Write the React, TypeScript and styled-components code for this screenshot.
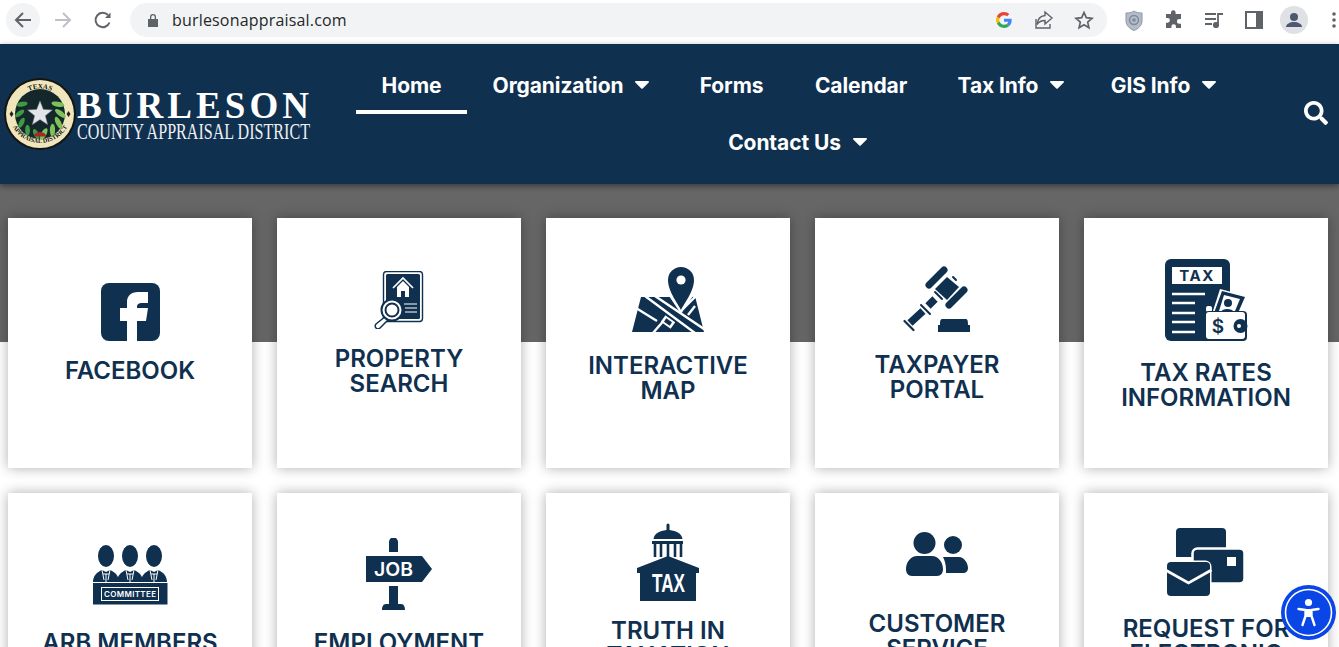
import React from "react";
import styled, { createGlobalStyle } from "styled-components";
import { FaSearch } from "react-icons/fa";

const NAVY = "#10304f";

const Global = createGlobalStyle`
  html, body { margin: 0; padding: 0; background: #fff; height: 647px; overflow: hidden; }
  * { box-sizing: border-box; }
`;

const Page = styled.div`
  width: 1339px;
  height: 647px;
  overflow: hidden;
  font-family: Inter, "Noto Sans", sans-serif;
`;

const Toolbar = styled.div`
  height: 44px;
  display: flex;
  align-items: flex-start;
  padding: 0 0 0 3px;
  background: #fff;
`;

const ToolButton = styled.div<{ $round?: boolean }>`
  flex: 0 0 40px;
  height: 40px;
  display: flex;
  align-items: center;
  justify-content: center;
  position: relative;
  &::before {
    content: "";
    display: ${(p) => (p.$round ? "block" : "none")};
    position: absolute;
    width: 34px;
    height: 34px;
    border-radius: 50%;
    background: #f1f3f4;
    left: 3px;
    top: 3px;
  }
  svg { position: relative; }
`;

const Omnibox = styled.div`
  flex: 0 0 977px;
  height: 34px;
  margin: 3px 7px 0 7px;
  border-radius: 17px;
  background: #f1f3f4;
  display: flex;
  align-items: center;
  padding: 0 3px 0 16px;
  color: #25272a;
`;

const Url = styled.span`
  font-family: "Open Sans", sans-serif;
  font-size: 16px;
  letter-spacing: 0.18px;
  margin-left: 12px;
  flex: 1;
`;

const OmniIcon = styled.div`
  flex: 0 0 40px;
  height: 34px;
  display: flex;
  align-items: center;
  justify-content: center;
`;

const Header = styled.header`
  height: 140px;
  background: ${NAVY};
  display: flex;
  position: relative;
  box-shadow: 0 2px 6px rgba(0, 0, 0, 0.45);
  z-index: 2;
`;

const LogoArea = styled.div`
  flex: 0 0 356px;
  padding: 34px 0 0 3px;
`;

const Nav = styled.nav`
  flex: 0 0 883px;
  display: flex;
  flex-wrap: wrap;
  justify-content: center;
  align-content: flex-start;
  padding-top: 13px;
`;

const NavItem = styled.a<{ $w: number; $active?: boolean }>`
  flex: 0 0 ${(p) => p.$w}px;
  height: 57px;
  display: flex;
  align-items: center;
  justify-content: center;
  gap: 12px;
  color: #fff;
  font-size: 21px;
  font-weight: 700;
  letter-spacing: -0.1px;
  position: relative;
  padding-bottom: 1px;
  &::after {
    content: "";
    display: ${(p) => (p.$active ? "block" : "none")};
    position: absolute;
    left: 0;
    right: 0;
    bottom: 0;
    height: 4px;
    background: #fff;
  }
`;

const SearchBox = styled.div`
  flex: 1;
  display: flex;
  justify-content: flex-end;
  padding: 57px 11px 0 0;
  color: #fff;
`;

const Main = styled.main`
  height: 463px;
  background: linear-gradient(#666 0, #666 158px, #fff 158px);
  padding: 34px 11px 0 8px;
  display: grid;
  grid-template-columns: repeat(5, 244px);
  grid-auto-rows: 250px;
  gap: 25px;
`;

const Card = styled.a<{ $top: number }>`
  background: #fff;
  box-shadow: 0 0 12px rgba(0, 0, 0, 0.32);
  padding-top: ${(p) => p.$top}px;
  display: flex;
  flex-direction: column;
  align-items: center;
  color: ${NAVY};
  svg { display: block; flex: none; }
`;

const Title = styled.h3<{ $gap: number }>`
  margin: ${(p) => p.$gap}px 0 0;
  font-size: 24px;
  line-height: 25px;
  font-weight: 600;
  text-align: center;
  white-space: pre-line;
`;

const A11y = styled.div`
  position: fixed;
  left: 1281px;
  top: 585px;
  width: 55px;
  height: 55px;
  svg { display: block; }
`;

const Caret = () => (
  <svg width="14" height="8" viewBox="0 0 14 8">
    <path fill="#fff" d="M1 0h12c1 0 1.300 1 .7 1.600L7.700 7.400c-.4.400-1 .400-1.400 0L.3 1.600C-.3 1 0 0 1 0z" />
  </svg>
);

const G = () => (
  <svg width="16" height="16" viewBox="0 0 48 48">
    <path fill="#EA4335" d="M24 9.500c3.500 0 6.700 1.200 9.200 3.600l6.900-6.900C35.900 2.400 30.500 0 24 0 14.600 0 6.500 5.400 2.600 13.200l8 6.200C12.500 13.700 17.800 9.500 24 9.500z" />
    <path fill="#4285F4" d="M47 24.500c0-1.600-.1-3.100-.4-4.500H24v9h12.900c-.6 3-2.200 5.500-4.700 7.200l7.700 6c4.500-4.200 7.100-10.300 7.100-17.700z" />
    <path fill="#FBBC05" d="M10.500 28.600c-.5-1.400-.8-3-.8-4.600s.3-3.200.8-4.600l-8-6.200C.9 16.500 0 20.100 0 24s.9 7.500 2.600 10.800l7.900-6.200z" />
    <path fill="#34A853" d="M24 48c6.500 0 11.900-2.100 15.900-5.800l-7.700-6c-2.200 1.400-4.900 2.300-8.200 2.300-6.200 0-11.500-4.200-13.400-9.900l-8 6.200C6.500 42.600 14.600 48 24 48z" />
  </svg>
);

const FacebookIcon = () => (
  <svg width="59" height="58" viewBox="0 0 59 58">
    <rect width="59" height="58" rx="8" fill={NAVY} />
    <path fill="#fff" d="M26 58V38h-7V25h7v-6c0-6 4-10 11-10h10v11h-6c-3 0-5 1-5 4v1h11l-2 13h-9v20z" />
  </svg>
);

const PropertyIcon = () => (
  <svg width="50" height="58" viewBox="374 271 50 58">
    <rect x="383.500" y="271.500" width="39" height="50" rx="3" fill="#fff" stroke={NAVY} strokeWidth="1.400" />
    <rect x="386" y="274" width="34" height="45" rx="1.500" fill={NAVY} />
    <path d="M393 288l10-10 10 10" fill="none" stroke="#fff" strokeWidth="1.700" />
    <path d="M397 287l6-6 6 6v10h-12z" fill="#fff" />
    <rect x="401" y="291" width="4" height="6" fill={NAVY} />
    <path d="M404 304h13M405 308h12M405 312h12" stroke="#fff" strokeWidth="1.200" />
    <path d="M386 316l-10 8a2.500 2.500 0 0 0 4 4l9-9" fill="#fff" stroke={NAVY} strokeWidth="1.500" />
    <circle cx="392" cy="310" r="10.500" fill="#fff" stroke={NAVY} strokeWidth="2" />
    <circle cx="392" cy="310" r="6.500" fill="#fff" stroke={NAVY} strokeWidth="2" />
  </svg>
);

const MapIcon = () => (
  <svg width="72" height="65" viewBox="632 267 72 65">
    <path fill={NAVY} d="M641 297h50c3-1 5 1 5 3l8 32h-72z" />
    <path stroke="#fff" strokeWidth="2.400" fill="none" d="M645 296l50 37M655 296l52 35M636 308l21 13M653 333l13-15M683 309l13-13M695 306l-7 9" />
    <g transform="rotate(35 668 322)">
      <rect x="662" y="318" width="12" height="8" fill="#fff" />
      <rect x="664.500" y="320" width="7" height="4" fill={NAVY} />
    </g>
    <path fill="#fff" d="M681 314l-16-24h32z" />
    <path fill={NAVY} d="M681 310c-2-5-13-18-13-30a13 13 0 0 1 26 0c0 12-11 25-13 30z" />
    <circle cx="681" cy="280" r="4.600" fill="#fff" />
  </svg>
);

const GavelIcon = () => (
  <svg width="68" height="66" viewBox="904 266 68 66">
    <g stroke={NAVY} strokeLinecap="round" fill="none">
      <path strokeWidth="7" d="M930 285l15-15M950 305l15-15" />
      <path strokeWidth="2.200" d="M905.500 321l9 9" />
      <path strokeWidth="7.500" strokeLinecap="butt" d="M911 323l13-12M929 306l7-7" />
      <path strokeWidth="2" d="M922 305l9 9M936 292l7 7M954 277l3 3" />
    </g>
    <path fill={NAVY} d="M948 277l12 10-12 13-12-11z" />
    <path fill={NAVY} d="M943 319h24c2 0 2 4 2 6h2v7h-32v-7h2c0-2 0-6 2-6z" />
  </svg>
);

const TaxIcon = () => (
  <svg width="84" height="83" viewBox="1164 259 84 83">
    <rect x="1165" y="259" width="65" height="82" rx="6" fill={NAVY} />
    <rect x="1172" y="267" width="50" height="17" fill="#fff" />
    <text x="1197" y="281" textAnchor="middle" fontFamily="Inter, sans-serif" fontWeight="700" fontSize="15" letterSpacing="1.500" fill={NAVY}>TAX</text>
    <path stroke="#fff" strokeWidth="2.400" d="M1172 294h33M1172 303h23M1172 313h23M1172 322h23M1172 332h23" />
    <path fill="#fff" d="M1220 289l27 7-9 18h-26z" />
    <path fill={NAVY} d="M1222 291l23 6-7 16h-24z" />
    <path fill="#fff" d="M1224 295l16 4-5 12h-16z" />
    <circle cx="1228" cy="303" r="4" fill={NAVY} />
    <path fill={NAVY} d="M1221 312c1-4 11-4 13 0z" />
    <rect x="1206" y="306" width="6" height="6" rx="2" fill="#fff" />
    <rect x="1205" y="311" width="42" height="30" rx="4" fill={NAVY} />
    <rect x="1206" y="312" width="39" height="27" rx="3" fill="#fff" />
    <text x="1218" y="333" textAnchor="middle" fontFamily="Inter, sans-serif" fontWeight="600" fontSize="19" fill={NAVY}>$</text>
    <circle cx="1240.500" cy="326" r="7" fill={NAVY} />
    <circle cx="1239" cy="326" r="2" fill="#fff" />
  </svg>
);

const Suit = ({ x }: { x: number }) => (
  <g>
    <ellipse cx={x} cy="556" rx="8" ry="11" fill={NAVY} />
    <path fill={NAVY} d={`M${x - 13} 582c0-6 4-10 9-12l4 2 4-2c5 2 9 6 9 12z`} />
    <path fill="none" stroke="#fff" strokeWidth="1" d={`M${x - 4} 570l2 10M${x + 4} 570l-2 10M${x - 3} 574h6M${x} 574v8`} />
  </g>
);

const CommitteeIcon = () => (
  <svg width="75" height="60" viewBox="93 545 75 60">
    <Suit x={106} />
    <Suit x={130} />
    <Suit x={154} />
    <rect x="93" y="583" width="74.500" height="21.500" fill={NAVY} />
    <rect x="101.500" y="587.500" width="57" height="13" fill="none" stroke="#fff" strokeWidth="1" />
    <text x="104" y="597" fontFamily="Inter, sans-serif" fontWeight="600" fontSize="8" textLength="52" fill="#fff">COMMITTEE</text>
  </svg>
);

const JobIcon = () => (
  <svg width="66" height="72" viewBox="366 538 66 72">
    <path fill={NAVY} d="M389 552v-10a4.500 4.500 0 0 1 9 0v10zM389 586h9v18h3c3 0 4 3 4 6h-23c0-3 1-6 4-6h3zM366 556h56l10 13-10 13h-56z" />
    <text x="374" y="576" fontFamily="Inter, sans-serif" fontWeight="600" fontSize="19" textLength="39" lengthAdjust="spacingAndGlyphs" fill="#fff">JOB</text>
  </svg>
);

const CapitolIcon = () => (
  <svg width="62" height="78" viewBox="637 523 62 78">
    <path fill={NAVY} d="M666.500 530v-5a1.500 1.500 0 0 1 3 0v5c7 1 12 3 13 9h-29c1-6 6-8 13-9z" />
    <rect x="652" y="541" width="31" height="3" fill={NAVY} />
    <path stroke={NAVY} strokeWidth="2.600" d="M655 544v13M661 544v13M668 544v13M675 544v13M681 544v13" />
    <path fill={NAVY} d="M668 556l31 12v5h-3v28h-56v-28h-3v-5z" />
    <text x="652" y="592" fontFamily="'Liberation Sans', sans-serif" fontWeight="700" fontSize="26" textLength="33" lengthAdjust="spacingAndGlyphs" fill="#fff">TAX</text>
  </svg>
);

const PeopleIcon = () => (
  <svg width="62" height="44" viewBox="906 532 62 44">
    <circle cx="924.500" cy="543" r="11" fill={NAVY} />
    <circle cx="953" cy="545" r="9" fill={NAVY} />
    <path fill={NAVY} d="M906 569c0-7 5-13 11-13h15c6 0 11 6 11 13 0 4-2 7-6 7h-25c-4 0-6-3-6-7zM946 573v-3c0-5-1-9-3-13h16c5 0 9 6 9 11 0 3-2 5-5 5z" />
  </svg>
);

const RequestIcon = () => (
  <svg width="78" height="68" viewBox="1168 528 78 68">
    <rect x="1177" y="528" width="50" height="32" rx="4" fill={NAVY} />
    <rect x="1177" y="557" width="30" height="6" fill="#fff" />
    <rect x="1193.500" y="548.500" width="52" height="35" rx="5" fill={NAVY} stroke="#fff" strokeWidth="2.500" />
    <rect x="1228" y="557" width="9" height="9" fill="#fff" />
    <rect x="1166.500" y="560.500" width="46" height="37" rx="6" fill="#fff" />
    <rect x="1168" y="562" width="43" height="34" rx="4" fill={NAVY} />
    <path fill="none" stroke="#fff" strokeWidth="2.800" d="M1166.500 570l23 13 23-13" />
  </svg>
);

const tiles = [
  { title: "FACEBOOK", top: 65, gap: 16.5, Icon: FacebookIcon },
  { title: "PROPERTY\nSEARCH", top: 53, gap: 17, Icon: PropertyIcon },
  { title: "INTERACTIVE\nMAP", top: 49, gap: 20.5, Icon: MapIcon },
  { title: "TAXPAYER\nPORTAL", top: 48, gap: 19.5, Icon: GavelIcon },
  { title: "TAX RATES\nINFORMATION", top: 41, gap: 17.5, Icon: TaxIcon },
  { title: "ARB MEMBERS", top: 52, gap: 24.5, Icon: CommitteeIcon },
  { title: "EMPLOYMENT", top: 45, gap: 19.5, Icon: JobIcon },
  { title: "TRUTH IN\nTAXATION", top: 30, gap: 16.5, Icon: CapitolIcon },
  { title: "CUSTOMER\nSERVICE", top: 39, gap: 34.5, Icon: PeopleIcon },
  { title: "REQUEST FOR\nELECTRONIC", top: 35, gap: 19.5, Icon: RequestIcon },
];

const navItems = [
  { label: "Home", w: 111, active: true },
  { label: "Organization", w: 208, caret: true },
  { label: "Forms", w: 113 },
  { label: "Calendar", w: 146 },
  { label: "Tax Info", w: 154, caret: true },
  { label: "GIS Info", w: 151, caret: true },
  { label: "Contact Us", w: 187, caret: true },
];

const leaves = [0, 1, 2, 3, 4];

const Logo = () => (
  <svg width="310" height="74" viewBox="3 78 310 74">
    <defs>
      <path id="sealTop" d="M14.500 114a25.500 25.500 0 0 1 51 0" />
      <path id="sealBottom" d="M9 112a31 31 0 0 0 62 0" />
    </defs>
    <circle cx="40" cy="114" r="36" fill="#15140f" />
    <circle cx="40" cy="114" r="34" fill="#efe6bd" />
    <circle cx="40" cy="114" r="25" fill="#14282c" />
    {leaves.map((i) => (
      <g key={`l${i}`} transform={`rotate(${-50 - i * 27} 40 114)`}>
        <ellipse cx="36" cy="94" rx="2.400" ry="5.500" fill="#3f9a43" transform="rotate(-50 36 94)" />
      </g>
    ))}
    {leaves.map((i) => (
      <g key={`r${i}`} transform={`rotate(${50 + i * 27} 40 114)`}>
        <ellipse cx="44" cy="94" rx="2.600" ry="6.500" fill="#7cc15a" transform="rotate(50 44 94)" />
      </g>
    ))}
    <path fill="#e3e4ea" stroke="#8b8d96" strokeWidth="0.500" d="M40 101l3.300 8.500 9 .5-7 5.700 2.300 8.800-7.600-5-7.600 5 2.300-8.800-7-5.700 9-.5z" />
    <path fill="#a6272a" d="M34 136.500c0-6 12-6 12 0z" />
    <path fill="#222" d="M9.500 114l2-3 2 3-2 3zM66.500 114l2-3 2 3-2 3z" />
    <text fontFamily="'Liberation Serif', serif" fontWeight="700" fontSize="7" fill="#111">
      <textPath href="#sealTop" startOffset="50%" textAnchor="middle">TEXAS</textPath>
    </text>
    <text fontFamily="'Liberation Serif', serif" fontWeight="700" fontSize="6.200" fill="#111">
      <textPath href="#sealBottom" startOffset="50%" textAnchor="middle">APPRAISAL DISTRICT</textPath>
    </text>
    <text x="77" y="118" fontFamily="'Liberation Serif', serif" fontWeight="700" fontSize="37" textLength="232" lengthAdjust="spacing" fill="#fff">BURLESON</text>
    <text x="77" y="139" fontFamily="'Liberation Serif', serif" fontSize="24" textLength="233" lengthAdjust="spacingAndGlyphs" fill="#eef1f4">COUNTY APPRAISAL DISTRICT</text>
  </svg>
);

export default function App() {
  return (
    <Page>
      <Global />
      <Toolbar>
        <ToolButton $round>
          <svg width="20" height="20" viewBox="0 0 20 20" fill="none" stroke="#5f6368" strokeWidth="2"><path d="M18 10H3M10 3l-7 7 7 7" /></svg>
        </ToolButton>
        <ToolButton>
          <svg width="20" height="20" viewBox="0 0 20 20" fill="none" stroke="#bdc1c6" strokeWidth="2"><path d="M2 10h15M10 3l7 7-7 7" /></svg>
        </ToolButton>
        <ToolButton>
          <svg width="20" height="20" viewBox="0 0 20 20" fill="none" stroke="#5f6368" strokeWidth="2"><path d="M16.500 12.500A7.200 7.200 0 1 1 15 5" /><path d="M17.500 2.500v5.500h-5.500z" fill="#5f6368" stroke="none" /></svg>
        </ToolButton>
        <Omnibox>
          <svg width="14" height="14" viewBox="0 0 14 14"><path fill="#5f6368" d="M2 6h10v8H2zM4 6V4a3 3 0 0 1 6 0v2H8.700V4a1.700 1.700 0 0 0-3.400 0v2z" /></svg>
          <Url>burlesonappraisal.com</Url>
          <OmniIcon><G /></OmniIcon>
          <OmniIcon>
            <svg width="20" height="20" viewBox="0 0 20 20" fill="none" stroke="#5f6368" strokeWidth="1.400"><path d="M2 9v9h14v-4" /><path d="M11 2l7 6-7 6v-3.500c-3 0-6 1-8 4 .5-5 3.500-8.500 8-9z" /></svg>
          </OmniIcon>
          <OmniIcon>
            <svg width="20" height="20" viewBox="0 0 20 20" fill="none" stroke="#5f6368" strokeWidth="1.700"><path d="M10 2.500l2.300 5.200 5.700.6-4.300 3.800 1.200 5.600-4.900-2.900-4.900 2.900 1.200-5.600L2 8.300l5.700-.6z" /></svg>
          </OmniIcon>
        </Omnibox>
        <ToolButton>
          <svg width="18" height="21" viewBox="0 0 18 21"><path fill="#b4bcc7" stroke="#8d97a6" d="M9 1c2 1.500 5 2 8 2v8c0 4.500-4 8-8 9.500C5 19 1 15.500 1 11V3c3 0 6-.5 8-2z" /><circle cx="9" cy="10" r="4.500" fill="none" stroke="#7d8a9b" strokeWidth="1.500" /><circle cx="9" cy="10" r="1.800" fill="#7d8a9b" /></svg>
        </ToolButton>
        <ToolButton>
          <svg width="20" height="20" viewBox="0 0 20 20"><path fill="#5f6368" d="M7 2.500a2.300 2.300 0 0 1 4.600 0V4H17v5h-1.700a2.400 2.400 0 0 0 0 4.800H17V18h-5v-1.500a2.300 2.300 0 0 0-4.600 0V18H2v-5.300h1.500a2.400 2.400 0 0 0 0-4.800H2V4h5z" /></svg>
        </ToolButton>
        <ToolButton>
          <svg width="20" height="20" viewBox="0 0 20 20" fill="none" stroke="#5f6368" strokeWidth="1.800"><path d="M1 4h11M1 9h11M1 14h7" /><path d="M14 15V4h5" /><circle cx="12" cy="15" r="2.200" fill="#5f6368" /></svg>
        </ToolButton>
        <ToolButton>
          <svg width="18" height="18" viewBox="0 0 18 18"><path fill="#5f6368" d="M0 0h18v18H0z" /><path fill="#fff" d="M2 2h9v14H2z" /></svg>
        </ToolButton>
        <ToolButton>
          <svg width="28" height="28" viewBox="0 0 28 28"><circle cx="14" cy="14" r="14" fill="#dfe1e5" /><circle cx="14" cy="11" r="4" fill="#4d5870" /><path fill="#4d5870" d="M6 21c0-3 4-5 8-5s8 2 8 5z" /></svg>
        </ToolButton>
        <ToolButton>
          <svg width="4" height="16" viewBox="0 0 4 16" fill="#5f6368"><circle cx="2" cy="2" r="1.800" /><circle cx="2" cy="8" r="1.800" /><circle cx="2" cy="14" r="1.800" /></svg>
        </ToolButton>
      </Toolbar>

      <Header>
        <LogoArea><Logo /></LogoArea>
        <Nav>
          {navItems.map((n) => (
            <NavItem key={n.label} $w={n.w} $active={n.active}>
              {n.label}
              {n.caret && <Caret />}
            </NavItem>
          ))}
        </Nav>
        <SearchBox><FaSearch size={24} /></SearchBox>
      </Header>

      <Main>
        {tiles.map(({ title, top, gap, Icon }) => (
          <Card key={title} $top={top}>
            <Icon />
            <Title $gap={gap}>{title}</Title>
          </Card>
        ))}
      </Main>

      <A11y>
        <svg width="55" height="55" viewBox="0 0 55 55">
          <circle cx="27.500" cy="27.500" r="27.500" fill="#0a45e6" />
          <circle cx="27.500" cy="27.500" r="23" fill="none" stroke="#fff" strokeWidth="1.600" />
          <circle cx="27.500" cy="17.500" r="3.600" fill="#fff" />
          <path fill="none" stroke="#fff" strokeWidth="2.400" strokeLinecap="round" strokeLinejoin="round" d="M17.500 24l7 1v6l-3 9M37.500 24l-7 1v6l3 9" />
          <path fill="#fff" d="M24.500 24h6v8h-6z" />
        </svg>
      </A11y>
    </Page>
  );
}
